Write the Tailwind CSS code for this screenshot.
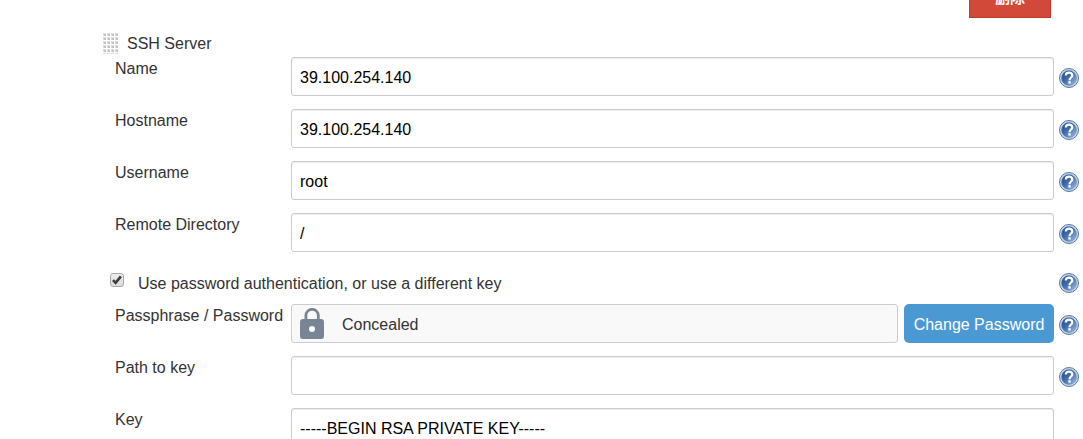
<!DOCTYPE html>
<html lang="en">
<head>
<meta charset="utf-8">
<title>SSH Server configuration</title>
<script src="https://cdn.jsdelivr.net/npm/@tailwindcss/browser@4"></script>
</head>
<body class="h-screen overflow-hidden bg-white text-base text-[#333] font-['Liberation_Sans','Noto_Sans_CJK_SC',sans-serif]">
<svg class="absolute size-0" aria-hidden="true">
  <defs>
    <linearGradient id="blue" x1="0" y1="0" x2="1" y2="1">
      <stop offset="0" stop-color="#1d4788"/><stop offset="0.45" stop-color="#3f6bab"/><stop offset="1" stop-color="#a3c1e4"/>
    </linearGradient>
    <symbol id="help" viewBox="0 0 20 20">
      <circle cx="10" cy="10" r="9.5" fill="#c9d7e9" stroke="#5577a8" stroke-width="1"/>
      <circle cx="10" cy="10" r="7.5" fill="url(#blue)" stroke="#4f76ad" stroke-width=".4"/>
      <path d="M6.8 7.6C6.8 5.5 8.3 4.7 10.1 4.7C12.1 4.7 13.3 5.8 13.3 7.4C13.3 9.5 10.5 9.6 10.5 12.2" fill="none" stroke="#fff" stroke-width="2.2"/>
      <rect x="9.3" y="13.2" width="2.4" height="2.4" fill="#fff"/>
    </symbol>
  </defs>
</svg>
<form class="pr-1">
  <div class="flex justify-end pr-7">
    <button type="button" class="-mt-[26px] h-11 w-[82px] border border-[#bb3a2c] bg-[#d24939] pt-1 text-[15px] font-bold leading-6 text-white">删除</button>
  </div>

  <h2 class="mt-[13px] flex h-6 items-center gap-[9px] pl-[103px] leading-6">
    <svg class="h-[21px] w-[15px]" viewBox="0 0 15 21" aria-hidden="true">
      <defs><pattern id="grip" width="4" height="4" patternUnits="userSpaceOnUse"><path d="M0 0h3v3h-3z" fill="#dedede"/><path d="M1 1h2v2h-2z" fill="#c4c4c4"/></pattern></defs>
      <rect width="15" height="21" fill="url(#grip)"/>
    </svg>
    <span class="pt-0.5">SSH Server</span>
  </h2>

  <div class="mt-0.5 flex flex-col gap-[13px] pl-[115px]">
    <div class="flex gap-[5px]">
      <label for="name" class="w-[171px] shrink-0 whitespace-nowrap leading-6">Name</label>
      <input id="name" value="39.100.254.140" class="h-[39px] min-w-0 grow rounded-[3px] border border-[#ccc] px-2 pt-0.5 text-black shadow-[inset_0_1px_1px_rgba(0,0,0,0.075)]">
      <button type="button" aria-label="Help for Name" class="mt-[11px] size-5 shrink-0"><svg class="size-5"><use href="#help"/></svg></button>
    </div>
    <div class="flex gap-[5px]">
      <label for="host" class="w-[171px] shrink-0 whitespace-nowrap leading-6">Hostname</label>
      <input id="host" value="39.100.254.140" class="h-[39px] min-w-0 grow rounded-[3px] border border-[#ccc] px-2 pt-0.5 text-black shadow-[inset_0_1px_1px_rgba(0,0,0,0.075)]">
      <button type="button" aria-label="Help for Hostname" class="mt-[11px] size-5 shrink-0"><svg class="size-5"><use href="#help"/></svg></button>
    </div>
    <div class="flex gap-[5px]">
      <label for="user" class="w-[171px] shrink-0 whitespace-nowrap leading-6">Username</label>
      <input id="user" value="root" class="h-[39px] min-w-0 grow rounded-[3px] border border-[#ccc] px-2 pt-0.5 text-black shadow-[inset_0_1px_1px_rgba(0,0,0,0.075)]">
      <button type="button" aria-label="Help for Username" class="mt-[11px] size-5 shrink-0"><svg class="size-5"><use href="#help"/></svg></button>
    </div>
    <div class="flex gap-[5px]">
      <label for="dir" class="w-[171px] shrink-0 whitespace-nowrap leading-6">Remote Directory</label>
      <input id="dir" value="/" class="h-[39px] min-w-0 grow rounded-[3px] border border-[#ccc] px-2 pt-0.5 text-black shadow-[inset_0_1px_1px_rgba(0,0,0,0.075)]">
      <button type="button" aria-label="Help for Remote Directory" class="mt-[11px] size-5 shrink-0"><svg class="size-5"><use href="#help"/></svg></button>
    </div>
  </div>

  <div class="mt-5 flex h-6 items-start justify-between pl-[110px]">
    <div class="flex items-start gap-[14px]">
      <span class="relative mt-px size-[14px]">
        <input id="auth" type="checkbox" checked class="peer block size-[14px] appearance-none rounded-[3px] border border-[#a9a9a9] bg-linear-to-b from-[#ededed] to-[#dcdcdc]">
        <svg class="pointer-events-none absolute inset-0 hidden size-[14px] peer-checked:block" viewBox="0 0 14 14" aria-hidden="true"><path d="M3 7.2l2.6 2.7L10.9 3.4" fill="none" stroke="#3b3b3b" stroke-width="2.6"/></svg>
      </span>
      <label for="auth" class="leading-6">Use password authentication, or use a different key</label>
    </div>
    <button type="button" aria-label="Help for password authentication" class="mt-px size-5 shrink-0"><svg class="size-5"><use href="#help"/></svg></button>
  </div>

  <div class="mt-2 flex flex-col gap-[13px] pl-[115px]">
    <div class="flex gap-[5px]">
      <span class="w-[171px] shrink-0 whitespace-nowrap leading-6">Passphrase / Password</span>
      <div class="flex min-w-0 grow gap-1.5">
        <div class="flex h-[39px] min-w-0 grow items-center gap-[18px] rounded-[3px] border border-[#ccc] bg-[#f9f9f9] px-2">
          <svg class="h-8 w-6" viewBox="0 0 24 32" aria-hidden="true"><path d="M5.9 12V7.5a6.2 6.2 0 0 1 12.4 0V12" fill="none" stroke="#788594" stroke-width="2.8"/><path fill-rule="evenodd" d="M3 11h18a3 3 0 0 1 3 3v14a3 3 0 0 1-3 3H3a3 3 0 0 1-3-3V14a3 3 0 0 1 3-3zM12 18a3 3 0 1 0 0 6 3 3 0 0 0 0-6z" fill="#788594"/></svg>
          <span class="pt-0.5">Concealed</span>
        </div>
        <button type="button" class="h-[39px] w-[150px] shrink-0 whitespace-nowrap rounded-[5px] bg-[#4b99d2] pt-0.5 text-white">Change Password</button>
      </div>
      <button type="button" aria-label="Help for Passphrase" class="mt-[11px] size-5 shrink-0"><svg class="size-5"><use href="#help"/></svg></button>
    </div>
    <div class="flex gap-[5px]">
      <label for="path" class="w-[171px] shrink-0 whitespace-nowrap leading-6">Path to key</label>
      <input id="path" class="h-[39px] min-w-0 grow rounded-[3px] border border-[#ccc] px-2 pt-0.5 text-black shadow-[inset_0_1px_1px_rgba(0,0,0,0.075)]">
      <button type="button" aria-label="Help for Path to key" class="mt-[11px] size-5 shrink-0"><svg class="size-5"><use href="#help"/></svg></button>
    </div>
    <div class="flex gap-[5px] pr-[25px]">
      <label for="key" class="w-[171px] shrink-0 whitespace-nowrap leading-6">Key</label>
      <textarea id="key" rows="5" class="min-w-0 grow resize-none rounded-[3px] border border-[#ccc] px-2 py-2 leading-6 text-black shadow-[inset_0_1px_1px_rgba(0,0,0,0.075)]">-----BEGIN RSA PRIVATE KEY-----</textarea>
    </div>
  </div>
</form>
</body>
</html>
